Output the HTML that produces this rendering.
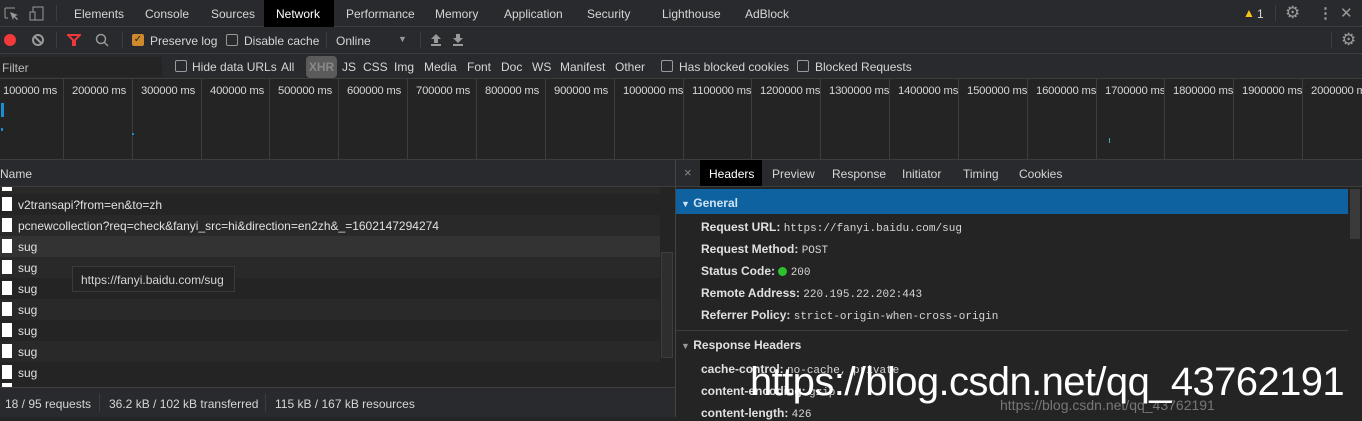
<!DOCTYPE html>
<html><head><meta charset="utf-8">
<style>
*{margin:0;padding:0;box-sizing:border-box}
body{width:1362px;height:417px;background:#242424;font-family:"Liberation Sans",sans-serif;font-size:12px;color:#d6d6d6;position:relative;overflow:hidden}
.a{position:absolute;white-space:nowrap}
.hl{position:absolute;height:1px;background:#3d3d3d}
.vl{position:absolute;width:1px;background:#3d3d3d}
.cb{position:absolute;width:12px;height:12px;border:1px solid #9a9a9a;border-radius:2px}
.mono{font-family:"Liberation Mono","DejaVu Sans Mono",monospace;font-size:11px}
.b{font-weight:bold;color:#e0e0e0}
</style></head><body>
<!-- tab bar -->
<div class="a" style="left:0;top:0;width:1362px;height:27px;background:#292a2d"></div>
<div class="hl" style="left:0;top:26px;width:1362px"></div>
<svg class="a" style="left:3px;top:5px" width="44" height="18"><path d="M2 3h10M2 3v10M2 13h3" stroke="#999" fill="none"/><path d="M7 7l8 3-3 1 3 3-1 1-3-3-1 3z" fill="#999"/><rect x="30" y="2" width="10" height="13" stroke="#999" fill="none"/><rect x="27" y="7" width="5" height="8" stroke="#999" fill="#292a2d"/></svg>
<div class="vl" style="left:56px;top:5px;height:16px"></div>
<div class="a" style="left:264px;top:0;width:70px;height:27px;background:#000"></div>
<div class="a" style="left:74px;top:7px">Elements</div>
<div class="a" style="left:145px;top:7px">Console</div>
<div class="a" style="left:211px;top:7px">Sources</div>
<div class="a" style="left:276px;top:7px;color:#fff">Network</div>
<div class="a" style="left:346px;top:7px">Performance</div>
<div class="a" style="left:435px;top:7px">Memory</div>
<div class="a" style="left:504px;top:7px">Application</div>
<div class="a" style="left:587px;top:7px">Security</div>
<div class="a" style="left:662px;top:7px">Lighthouse</div>
<div class="a" style="left:745px;top:7px">AdBlock</div>
<div class="a" style="left:1243px;top:6px;color:#f5c518;font-size:12px">▲</div>
<div class="a" style="left:1257px;top:7px">1</div>
<div class="vl" style="left:1275px;top:5px;height:16px"></div>
<div class="a" style="left:1285px;top:3px;color:#999;font-size:17px">⚙</div>
<div class="a" style="left:1318px;top:4px;color:#999;font-size:15px;font-weight:bold">⋮</div>
<div class="a" style="left:1340px;top:4px;color:#999;font-size:15px">✕</div>
<!-- toolbar -->
<div class="a" style="left:0;top:27px;width:1362px;height:26px;background:#292a2d"></div>
<div class="hl" style="left:0;top:53px;width:1362px"></div>
<div class="a" style="left:4px;top:34px;width:12px;height:12px;border-radius:50%;background:#f2393c"></div>
<div class="a" style="left:32px;top:34px;width:12px;height:12px;border-radius:50%;border:2px solid #999"></div>
<svg class="a" style="left:32px;top:34px" width="12" height="12"><path d="M3 3l6 6" stroke="#999" stroke-width="2"/></svg>
<div class="vl" style="left:56px;top:32px;height:16px"></div>
<svg class="a" style="left:67px;top:33px" width="14" height="14"><path d="M1 2h12L8 7v5H6V7z" fill="none" stroke="#f0373c" stroke-width="2"/></svg>
<svg class="a" style="left:95px;top:33px" width="14" height="14"><circle cx="6" cy="6" r="4.5" stroke="#999" fill="none" stroke-width="1.5"/><path d="M9 9l4 4" stroke="#999" stroke-width="1.5"/></svg>
<div class="vl" style="left:122px;top:32px;height:16px"></div>
<div class="a" style="left:132px;top:34px;width:12px;height:12px;background:#d08a2e;border-radius:2px;color:#222;font-size:10px;line-height:12px;text-align:center">✓</div>
<div class="a" style="left:150px;top:34px">Preserve log</div>
<div class="cb" style="left:226px;top:34px"></div>
<div class="a" style="left:244px;top:34px">Disable cache</div>
<div class="vl" style="left:326px;top:32px;height:16px"></div>
<div class="a" style="left:336px;top:34px">Online</div>
<div class="a" style="left:398px;top:34px;font-size:9px;color:#999">▼</div>
<div class="vl" style="left:420px;top:32px;height:16px"></div>
<svg class="a" style="left:429px;top:33px" width="40" height="14"><path d="M7 1l5 5H9v4H5V6H2z" fill="#999"/><rect x="2" y="11" width="10" height="2" fill="#999"/><path d="M35 10l5-5h-3V1h-4v4h-3z" fill="#999" transform="translate(-6,0)"/><rect x="24" y="11" width="10" height="2" fill="#999"/></svg>
<div class="vl" style="left:1331px;top:32px;height:16px"></div>
<div class="a" style="left:1341px;top:30px;color:#999;font-size:17px">⚙</div>
<!-- filter row -->
<div class="a" style="left:0;top:54px;width:1362px;height:25px;background:#292a2d"></div>
<div class="a" style="left:0;top:57px;width:162px;height:20px;background:#242424"></div>
<div class="a" style="left:2px;top:61px;color:#bbb">Filter</div>
<div class="cb" style="left:175px;top:60px"></div>
<div class="a" style="left:192px;top:60px">Hide data URLs</div>
<div class="a" style="left:281px;top:60px">All</div>
<div class="a" style="left:306px;top:56px;width:31px;height:22px;background:#5b5b5b;border-radius:4px;color:#888;font-weight:bold;text-align:center;line-height:22px">XHR</div>
<div class="a" style="left:342px;top:60px">JS</div>
<div class="a" style="left:363px;top:60px">CSS</div>
<div class="a" style="left:394px;top:60px">Img</div>
<div class="a" style="left:424px;top:60px">Media</div>
<div class="a" style="left:467px;top:60px">Font</div>
<div class="a" style="left:501px;top:60px">Doc</div>
<div class="a" style="left:532px;top:60px">WS</div>
<div class="a" style="left:560px;top:60px">Manifest</div>
<div class="a" style="left:615px;top:60px">Other</div>
<div class="cb" style="left:661px;top:60px"></div>
<div class="a" style="left:679px;top:60px">Has blocked cookies</div>
<div class="cb" style="left:797px;top:60px"></div>
<div class="a" style="left:815px;top:60px">Blocked Requests</div>
<div class="hl" style="left:0;top:78px;width:1362px"></div>
<!-- timeline -->
<div id="tl"></div>
<div class="a" style="left:1px;top:103px;width:3px;height:14px;background:#1a8fd0"></div>
<div class="a" style="left:1px;top:128px;width:2px;height:3px;background:#1a8fd0"></div>
<div class="a" style="left:132px;top:133px;width:2px;height:2px;background:#1a8fd0"></div>
<div class="a" style="left:1109px;top:138px;width:1px;height:5px;background:#4ab"></div>
<div class="hl" style="left:0;top:159px;width:1362px"></div>
<!-- left pane -->
<div class="a" style="left:0;top:160px;width:675px;height:27px;background:#292a2d"></div>
<div class="a" style="left:0;top:167px">Name</div>
<div class="hl" style="left:0;top:186px;width:675px"></div>
<div id="rows"></div>
<div class="a" style="left:660px;top:187px;width:15px;height:201px;background:#242424"></div>
<div class="a" style="left:661px;top:252px;width:12px;height:106px;background:#2e2e2e;border:1px solid #3d3d3d"></div>
<div class="a" style="left:72px;top:266px;width:163px;height:26px;background:#242424;border:1px solid #3a3a3a;padding:6px 8px">https://fanyi.baidu.com/sug</div>
<div class="hl" style="left:0;top:387px;width:675px"></div>
<div class="a" style="left:0;top:388px;width:675px;height:29px;background:#292a2d"></div>
<div class="a" style="left:5px;top:397px">18 / 95 requests</div>
<div class="vl" style="left:99px;top:394px;height:18px"></div>
<div class="a" style="left:109px;top:397px">36.2 kB / 102 kB transferred</div>
<div class="vl" style="left:265px;top:394px;height:18px"></div>
<div class="a" style="left:275px;top:397px">115 kB / 167 kB resources</div>
<div class="vl" style="left:675px;top:160px;height:257px;background:#444"></div>
<!-- right pane -->
<div class="a" style="left:676px;top:160px;width:686px;height:26px;background:#292a2d"></div>
<div class="hl" style="left:676px;top:186px;width:686px"></div>
<div class="a" style="left:684px;top:165px;color:#888;font-size:13px">×</div>
<div class="a" style="left:700px;top:160px;width:62px;height:26px;background:#000"></div>
<div class="a" style="left:709px;top:167px;color:#fff">Headers</div>
<div class="a" style="left:772px;top:167px">Preview</div>
<div class="a" style="left:832px;top:167px">Response</div>
<div class="a" style="left:902px;top:167px">Initiator</div>
<div class="a" style="left:963px;top:167px">Timing</div>
<div class="a" style="left:1019px;top:167px">Cookies</div>
<div class="a" style="left:676px;top:189px;width:672px;height:25px;background:#0e62a0"></div>
<div class="a" style="left:681px;top:196px;color:#cfe3f2;font-weight:bold"><span style="font-size:9px">▼</span> General</div>
<div class="a" style="left:1348px;top:187px;width:14px;height:230px;background:#242424"></div>
<div class="a" style="left:1350px;top:189px;width:10px;height:50px;background:#3a3a3a"></div>
<div class="a" style="left:701px;top:220px"><span class="b">Request URL:</span> <span class="mono">https://fanyi.baidu.com/sug</span></div>
<div class="a" style="left:701px;top:242px"><span class="b">Request Method:</span> <span class="mono">POST</span></div>
<div class="a" style="left:701px;top:264px"><span class="b">Status Code:</span> <span style="display:inline-block;width:9px;height:9px;border-radius:50%;background:#2ec12e;vertical-align:-1px"></span> <span class="mono">200</span></div>
<div class="a" style="left:701px;top:286px"><span class="b">Remote Address:</span> <span class="mono">220.195.22.202:443</span></div>
<div class="a" style="left:701px;top:308px"><span class="b">Referrer Policy:</span> <span class="mono">strict-origin-when-cross-origin</span></div>
<div class="hl" style="left:676px;top:330px;width:672px"></div>
<div class="a" style="left:681px;top:338px" ><span style="font-size:9px;color:#999">▼</span> <span class="b">Response Headers</span></div>
<div class="a" style="left:701px;top:362px"><span class="b">cache-control:</span> <span class="mono">no-cache, private</span></div>
<div class="a" style="left:701px;top:384px"><span class="b">content-encoding:</span> <span class="mono">gzip</span></div>
<div class="a" style="left:701px;top:406px"><span class="b">content-length:</span> <span class="mono">426</span></div>
<!-- watermark -->
<div class="a" style="left:1000px;top:397px;color:#777;font-size:14px">https://blog.csdn.net/qq_43762191</div>
<div class="a" style="left:750px;top:360px;color:#fff;font-size:40px;letter-spacing:-0.6px">https://blog.csdn.net/qq_43762191</div>
<script>
var tl=document.getElementById('tl'),h='';
for(var i=0;i<20;i++){var x=Math.round(i*68.85);
if(i>0)h+='<div class="vl" style="left:'+(x-6)+'px;top:79px;height:80px"></div>';
h+='<div class="a" style="left:'+(x+3)+'px;top:85px;font-size:11.3px;letter-spacing:-0.2px">'+((i+1)*100000)+' ms</div>';}
tl.outerHTML=h;
var r=document.getElementById('rows'),s='';
var names=['v2transapi?from=en&amp;to=zh','pcnewcollection?req=check&amp;fanyi_src=hi&amp;direction=en2zh&amp;_=1602147294274','sug','sug','sug','sug','sug','sug','sug'];
s+='<div class="a" style="left:0;top:187px;width:660px;height:7px;background:#292929"></div><div class="a" style="left:2px;top:187px;width:10px;height:4px;background:#fff"></div>';
for(var j=0;j<9;j++){var y=194+j*21;var bg=j==2?'#333':(j%2?'#292929':'#242424');
s+='<div class="a" style="left:0;top:'+y+'px;width:660px;height:21px;background:'+bg+'"></div>';
s+='<div class="a" style="left:2px;top:'+(y+3)+'px;width:10px;height:14px;background:#fff"></div>';
s+='<div class="a" style="left:18px;top:'+(y+4)+'px;color:#e0e0e0">'+names[j]+'</div>';}
s+='<div class="a" style="left:2px;top:383px;width:10px;height:4px;background:#fff"></div>';
r.outerHTML=s;
</script>
</body></html>
